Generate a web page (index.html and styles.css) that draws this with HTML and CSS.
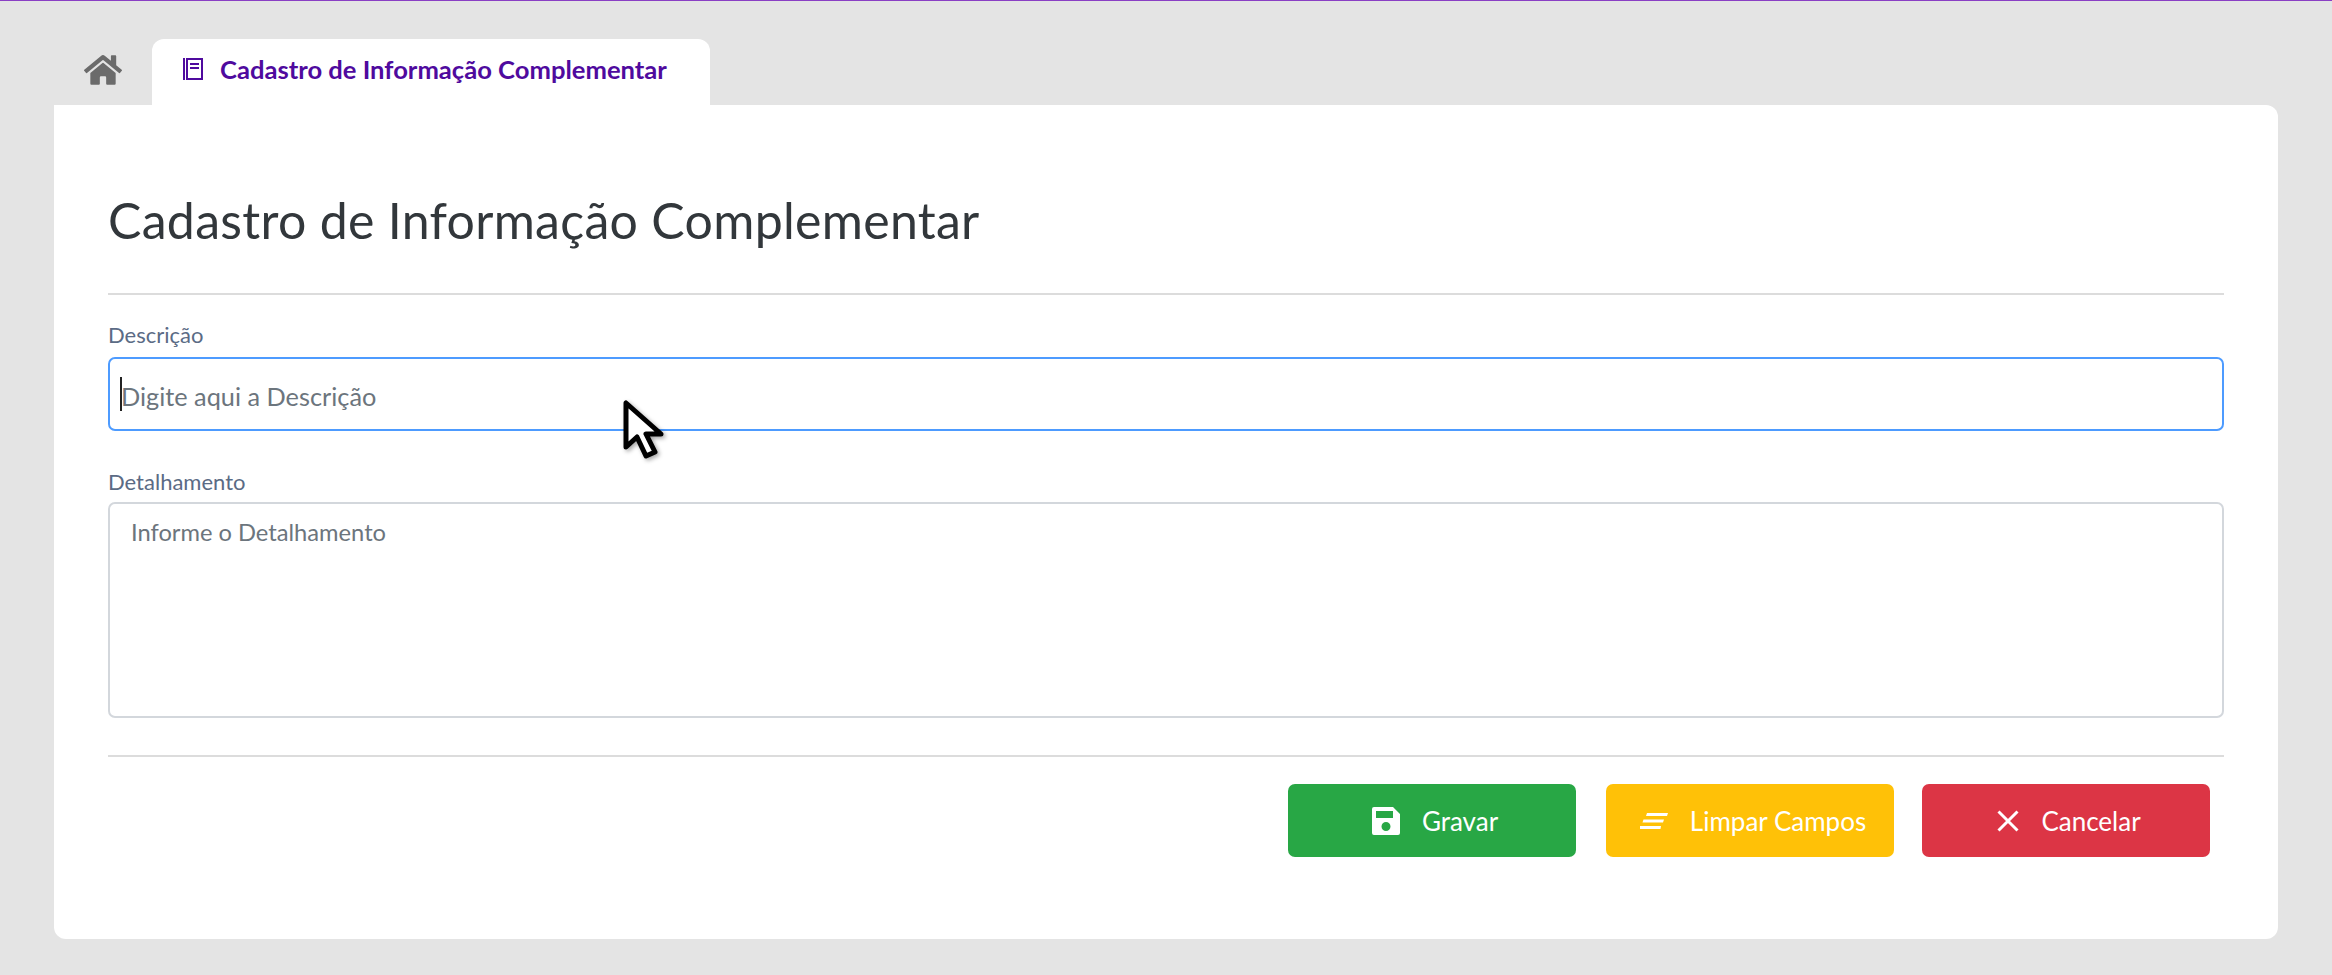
FILE: index.html

```html
<!DOCTYPE html>
<html lang="pt-BR">
<head>
    <meta charset="UTF-8">
    <meta name="viewport" content="width=device-width, initial-scale=1.0">
    <title>Cadastro de Informação Complementar</title>
    <link rel="stylesheet" href="styles.css">
</head>
<body>
    <div class="tabs">
        <a class="tab-home" href="#">
            <svg class="icon-home" viewBox="0 0 576 512"><path d="M280.37 148.26L96 300.11V464a16 16 0 0 0 16 16l112.06-.29a16 16 0 0 0 15.92-16V368a16 16 0 0 1 16-16h64a16 16 0 0 1 16 16v95.64a16 16 0 0 0 16 16.05L464 480a16 16 0 0 0 16-16V300L295.67 148.26a12.19 12.19 0 0 0-15.3 0zM571.6 251.47L488 182.56V44.05a12 12 0 0 0-12-12h-56a12 12 0 0 0-12 12v72.61L318.47 43a48 48 0 0 0-61 0L4.34 251.47a12 12 0 0 0-1.6 16.9l25.5 31A12 12 0 0 0 45.15 301l235.22-193.74a12.19 12.19 0 0 1 15.3 0L530.9 301a12 12 0 0 0 16.9-1.6l25.5-31a12 12 0 0 0-1.7-16.93z"/></svg>
        </a>
        <a class="tab-active" href="#">
            <svg class="icon-book" viewBox="0 0 20 22"><path d="M0 0h2v22H0z" fill="currentColor"/><path d="M4 1h15v20H4z" fill="none" stroke="currentColor" stroke-width="2"/><path d="M7 5h9v2H7zM7 9h9v2H7z" fill="currentColor"/></svg>
            Cadastro de Informação Complementar
        </a>
    </div>

    <main class="panel">
        <h1>Cadastro de Informação Complementar</h1>
        <hr>
        <form>
            <label for="descricao">Descrição</label>
            <div class="input-wrap">
                <input type="text" id="descricao" placeholder="Digite aqui a Descrição">
                <span class="caret"></span>
            </div>

            <label for="detalhamento" class="label-second">Detalhamento</label>
            <textarea id="detalhamento" placeholder="Informe o Detalhamento"></textarea>
        </form>
        <hr class="hr-bottom">
        <div class="actions">
            <button class="btn btn-green" type="button">
                <svg class="btn-icon" viewBox="0 0 28 28"><path fill-rule="evenodd" d="M2 0h19l7 7v19a2 2 0 0 1-2 2H2a2 2 0 0 1-2-2V2a2 2 0 0 1 2-2zM4 4v7h17V4zM14 15a4.500 4.500 0 1 0 0 9 4.500 4.500 0 0 0 0-9z" fill="#fff"/></svg>
                Gravar
            </button>
            <button class="btn btn-yellow" type="button">
                <svg class="btn-icon" viewBox="0 0 28 16"><path d="M7 0h21l-1 3H6zM3.500 6.500H24l-1 3H2.500zM0 13h21l-.5 3H0z" fill="#fff"/></svg>
                Limpar Campos
            </button>
            <button class="btn btn-red" type="button">
                <svg class="btn-icon icon-x" viewBox="0 0 22 22"><path d="M1.500 1.500l19 19M20.500 1.500l-19 19" stroke="#fff" stroke-width="3" fill="none"/></svg>
                Cancelar
            </button>
        </div>
    </main>

    <!-- mouse pointer captured in the screenshot -->
    <svg class="pointer" viewBox="0 0 44 62"><path d="M5 4v44l11-10 9 19 9-4-9-18h15z" fill="#fff" stroke="#000" stroke-width="5" stroke-linejoin="round"/></svg>
</body>
</html>
```

FILE: styles.css

```css
body {
    font-family: Lato, "Noto Sans", sans-serif;
    background-color: #e4e4e4;
    border-top: 1px solid #8a3fc4;
    margin: 0;
    height: 974px;
    overflow: hidden;
    position: relative;
}
.tabs {
    display: flex;
    padding: 38px 0 0 54px;
    height: 66px;
}
.tab-home {
    width: 98px;
    display: flex;
    align-items: center;
    justify-content: center;
    padding-bottom: 4px;
    box-sizing: border-box;
}
.icon-home {
    width: 38px;
    height: 34px;
    fill: #6b6b6b;
}
.tab-active {
    width: 558px;
    box-sizing: border-box;
    display: flex;
    align-items: center;
    gap: 17px;
    padding: 0 0 6px 31px;
    background-color: #fff;
    border-radius: 12px 12px 0 0;
    color: #4f0a9e;
    font-size: 25.6px;
    font-weight: 700;
    text-decoration: none;
}
.icon-book {
    width: 20px;
    height: 22px;
    color: #4f0a9e;
}
.panel {
    background-color: #fff;
    margin: 0 54px;
    height: 834px;
    box-sizing: border-box;
    padding: 84px 54px 0;
    border-radius: 0 12px 12px 12px;
}
h1 {
    margin: 0 0 42px;
    font-size: 50px;
    line-height: 62px;
    font-weight: 400;
    color: #32373b;
    letter-spacing: 0.3px;
}
hr {
    border: none;
    border-top: 2px solid #dcdcdc;
    margin: 0 0 27px;
}
label {
    display: block;
    font-size: 22px;
    line-height: 26px;
    color: #5b6b85;
    margin-bottom: 9px;
}
.label-second {
    margin-top: 38px;
    margin-bottom: 7px;
}
.input-wrap {
    position: relative;
}
input, textarea {
    display: block;
    width: 100%;
    box-sizing: border-box;
    background-color: #fff;
    border-radius: 7px;
    font-family: Lato, "Noto Sans", sans-serif;
    font-size: 23.7px;
    outline: none;
}
input::placeholder, textarea::placeholder {
    color: #6c757d;
    opacity: 1;
}
input {
    height: 74px;
    border: 2px solid #4d9bff;
    padding: 3px 11px 0;
    font-size: 25.3px;
}
textarea {
    height: 216px;
    border: 2px solid #d3d7dc;
    padding: 14px 21px;
    resize: none;
}
.caret {
    position: absolute;
    left: 12px;
    top: 20px;
    width: 2px;
    height: 34px;
    background-color: #222;
}
.hr-bottom {
    margin: 37px 0 27px;
}
.actions {
    display: flex;
    justify-content: flex-end;
    gap: 28px;
    padding-right: 14px;
}
.btn {
    width: 288px;
    height: 73px;
    display: flex;
    align-items: center;
    justify-content: center;
    gap: 22px;
    border: none;
    border-radius: 7px;
    padding: 0 0 0 6px;
    color: #fff;
    font-family: Lato, "Noto Sans", sans-serif;
    font-size: 26px;
    cursor: pointer;
}
.btn-icon {
    width: 28px;
    height: 28px;
}
.icon-x {
    width: 22px;
    height: 22px;
}
.btn-green {
    background-color: #28a745;
    margin-right: 2px;
}
.btn-yellow {
    background-color: #ffc107;
}
.btn-red {
    background-color: #dc3545;
}
.pointer {
    position: absolute;
    left: 621px;
    top: 398px;
    width: 44px;
    height: 62px;
    filter: drop-shadow(2px 2px 2px rgba(0, 0, 0, 0.35));
}
```
